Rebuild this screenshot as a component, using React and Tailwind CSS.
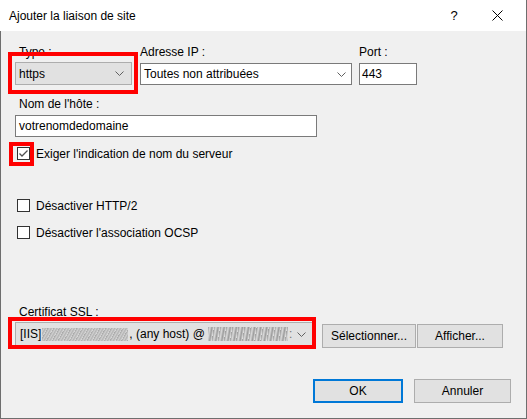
import React from 'react';

const Chevron = () => (
  <svg width="9" height="5" viewBox="0 0 9 5" className="shrink-0">
    <polyline points="0.5,0.5 4.5,4.5 8.5,0.5" fill="none" stroke="#606060" strokeWidth="1" />
  </svg>
);

const Checkbox = ({ checked }) => (
  <div className="w-[13px] h-[13px] border border-[#333333] bg-white shrink-0 flex items-center justify-center">
    {checked && (
      <svg width="11" height="11" viewBox="0 0 11 11">
        <polyline points="1.5,5.5 4,8 9.5,2.5" fill="none" stroke="#505050" strokeWidth="1.3" />
      </svg>
    )}
  </div>
);

const Button = ({ children, className = '' }) => (
  <div className={`h-[24px] flex items-center justify-center bg-[#e1e1e1] border border-[#adadad] ${className}`}>
    {children}
  </div>
);

const App = () => {
  return (
    <div
      className="w-[527px] h-[419px] flex flex-col text-[12px] leading-[14px] text-black"
      style={{ fontFamily: '"Liberation Sans", Arial, sans-serif' }}
    >
      <div className="h-[31px] bg-white border-r border-[#6e6e6e] flex items-center pl-[9px] shrink-0">
        <span className="flex-1">Ajouter la liaison de site</span>
        <span className="w-[12px] text-center mr-[32px] text-[13px]">?</span>
        <svg width="11" height="11" viewBox="0 0 11 11" className="mr-[23px]">
          <line x1="0.5" y1="0.5" x2="10.5" y2="10.5" stroke="#000" strokeWidth="1" />
          <line x1="10.5" y1="0.5" x2="0.5" y2="10.5" stroke="#000" strokeWidth="1" />
        </svg>
      </div>

      <div className="flex-1 flex flex-col bg-[#f0f0f0] border-l border-r border-b border-[#6e6e6e] pl-[14px]">
        {/* type / ip / port */}
        <div className="flex mt-[14px] items-start">
          <div className="flex flex-col w-[117px]">
            <span className="h-[14px] pl-[4px]">Type :</span>
            <div className="relative mt-[3px]">
              <div className="h-[23px] bg-[#e1e1e1] border border-[#adadad] flex items-center pl-[3px] pr-[7px]">
                <span className="flex-1">https</span>
                <Chevron />
              </div>
              <div className="absolute -left-[7px] -right-[6px] -top-[10px] -bottom-[9px] border-4 border-[#ff0000]" />
            </div>
          </div>
          <div className="flex flex-col w-[212px] ml-[8px]">
            <span className="h-[14px]">Adresse IP :</span>
            <div className="mt-[4px] h-[22px] bg-white border border-[#7a7a7a] flex items-center pl-[3px] pr-[5px]">
              <span className="flex-1">Toutes non attribuées</span>
              <Chevron />
            </div>
          </div>
          <div className="flex flex-col w-[58px] ml-[7px]">
            <span className="h-[14px]">Port :</span>
            <div className="mt-[4px] h-[22px] bg-white border border-[#7a7a7a] flex items-center pl-[2px]">443</div>
          </div>
        </div>

        {/* host name */}
        <span className="h-[14px] mt-[12px] pl-[4px]">Nom de l'hôte :</span>
        <div className="mt-[4px] w-[302px] h-[22px] bg-white border border-[#7a7a7a] flex items-center pl-[3px]">
          votrenomdedomaine
        </div>

        {/* checkboxes */}
        <div className="flex items-center mt-[10px] pl-[2px] h-[13px]">
          <div className="relative">
            <Checkbox checked />
            <div className="absolute -left-[8px] -right-[4px] -top-[5px] -bottom-[6px] border-4 border-[#ff0000]" />
          </div>
          <span className="ml-[6px]">Exiger l'indication de nom du serveur</span>
        </div>
        <div className="flex items-center mt-[39px] pl-[2px] h-[13px]">
          <Checkbox />
          <span className="ml-[6px]">Désactiver HTTP/2</span>
        </div>
        <div className="flex items-center mt-[14px] pl-[2px] h-[13px]">
          <Checkbox />
          <span className="ml-[6px]">Désactiver l'association OCSP</span>
        </div>

        {/* certificate */}
        <span className="h-[14px] mt-[66px] pl-[4px]">Certificat SSL :</span>
        <div className="flex items-start mt-[3px]">
          <div className="relative">
            <div className="w-[298px] h-[24px] bg-[#e1e1e1] border border-[#adadad] flex items-center pl-[4px] pr-[6px]">
              <span>[IIS]</span>
              <div className="w-[86px] h-[13px] ml-[1px] bg-[repeating-linear-gradient(120deg,#a8a8a8_0px,#d0d0d0_2px,#b4b4b4_3px,#d8d8d8_5px)]" />
              <span className="ml-[1px] whitespace-nowrap">, (any host) @</span>
              <div className="w-[80px] h-[14px] ml-[3px] bg-[repeating-linear-gradient(100deg,#a0a0a0_0px,#dadada_2px,#9c9c9c_4px,#e0e0e0_6px)]" />
              <span className="flex-1 text-[#777] pl-[1px]">:</span>
              <Chevron />
            </div>
            <div className="absolute -left-[7px] -right-[3px] -top-[5px] -bottom-[3px] border-4 border-[#ff0000]" />
          </div>
          <Button className="w-[94px] ml-[9px] mt-[2px]">Sélectionner...</Button>
          <Button className="w-[86px] ml-[1px] mt-[2px]">Afficher...</Button>
        </div>

        {/* footer */}
        <div className="flex mt-[31px] pl-[298px]">
          <div className="w-[90px] h-[24px] flex items-center justify-center bg-[#e1e1e1] border-2 border-[#0078d7]">OK</div>
          <Button className="w-[97px] ml-[11px]">Annuler</Button>
        </div>
      </div>
    </div>
  );
};

export default App;
